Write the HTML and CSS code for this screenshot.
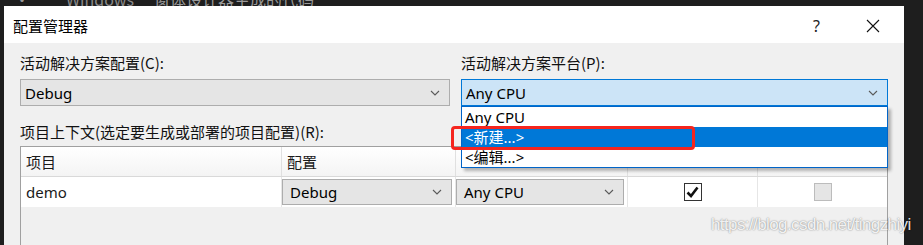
FILE: index.html
```html
<!DOCTYPE html>
<html lang="zh-CN">
<head>
<meta charset="utf-8">
<title>配置管理器</title>
<link rel="stylesheet" href="styles.css">
</head>
<body>
<div class="top-strip"><span class="code-word w1">·</span><span class="code-word w2">Windows</span><span class="code-word w3">窗体设计器生成的代码</span></div>
<div class="desk">
  <div class="gutter"></div>
  <div class="dialog">
    <div class="titlebar">
      <span class="title">配置管理器</span>
      <span class="help">?</span>
      <span class="close"><svg width="14" height="14" viewBox="0 0 14 14"><path d="M1 1L13 13M13 1L1 13" stroke="#111" stroke-width="1.1" fill="none"/></svg></span>
    </div>
    <div class="body">
      <div class="top-row">
        <div class="field field-left">
          <div class="label">活动解决方案配置(C):</div>
          <div class="combo"><span class="combo-text">Debug</span><svg class="chev" width="10" height="6" viewBox="0 0 10 6"><path d="M1 1L5 5L9 1" stroke="#5a5a5a" stroke-width="1.1" fill="none"/></svg></div>
        </div>
        <div class="field field-right">
          <div class="label">活动解决方案平台(P):</div>
          <div class="combo combo-open"><span class="combo-text">Any CPU</span><svg class="chev" width="10" height="6" viewBox="0 0 10 6"><path d="M1 1L5 5L9 1" stroke="#5a5a5a" stroke-width="1.1" fill="none"/></svg>
            <ul class="droplist">
              <li class="item">Any CPU</li>
              <li class="item item-selected">&lt;新建...&gt;</li>
              <li class="item">&lt;编辑...&gt;</li>
              <li class="mark"></li>
            </ul>
          </div>
        </div>
      </div>
      <div class="label ctx-label">项目上下文(选定要生成或部署的项目配置)(R):</div>
      <div class="grid">
        <div class="row head">
          <div class="cell c1">项目</div>
          <div class="cell c2">配置</div>
          <div class="cell c3"></div>
          <div class="cell c4"></div>
          <div class="cell c5"></div>
        </div>
        <div class="row data">
          <div class="cell c1">demo</div>
          <div class="cell c2"><div class="combo small"><span class="combo-text">Debug</span><svg class="chev" width="10" height="6" viewBox="0 0 10 6"><path d="M1 1L5 5L9 1" stroke="#5a5a5a" stroke-width="1.1" fill="none"/></svg></div></div>
          <div class="cell c3"><div class="combo small"><span class="combo-text">Any CPU</span><svg class="chev" width="10" height="6" viewBox="0 0 10 6"><path d="M1 1L5 5L9 1" stroke="#5a5a5a" stroke-width="1.1" fill="none"/></svg></div></div>
          <div class="cell c4 center"><span class="check"><svg width="13" height="12" viewBox="0 0 13 12"><path d="M1.5 6.5L5 10L11.5 1.5" stroke="#111" stroke-width="2.6" fill="none" stroke-linejoin="miter"/></svg></span></div>
          <div class="cell c5 center"><span class="check disabled"></span></div>
        </div>
        <div class="filler"></div>
      </div>
    </div>
  </div>
  <div class="right-dark"></div>
</div>
<div class="watermark">https://blog.csdn.net/tingzhiyi</div>
</body>
</html>
```

FILE: styles.css
```css
html, body {
  margin: 0;
  padding: 0;
}
body {
  width: 923px;
  height: 245px;
  overflow: hidden;
  background: #1e1e1e;
  font-family: "Segoe UI", "Noto Sans", "Noto Sans CJK SC", sans-serif;
  font-size: 15px;
  color: #1a1a1a;
  position: relative;
}
.top-strip {
  height: 6px;
  overflow: hidden;
  background: #1e1e1e;
  display: flex;
  align-items: flex-end;
}
.code-word {
  display: block;
  flex-shrink: 0;
  font-family: "Noto Sans CJK SC", sans-serif;
  font-size: 16px;
  line-height: 20px;
  height: 20px;
  margin-bottom: -3px;
  color: #9a9a9a;
  white-space: nowrap;
}
.w1 { margin-left: 14px; }
.w2 { margin-left: 36px; color: #8a8a8a; }
.w3 { margin-left: 20px; }
.desk {
  display: flex;
  height: 239px;
}
.gutter {
  width: 4px;
  flex-shrink: 0;
  background: #1e1e1e;
}
.right-dark {
  flex: 1;
  background: #1e1e1e;
}
.dialog {
  width: 900px;
  flex-shrink: 0;
  background: #f0f0f0;
  display: flex;
  flex-direction: column;
  overflow: hidden;
}
.titlebar {
  height: 37px;
  flex-shrink: 0;
  background: #fff;
  display: flex;
  align-items: center;
  padding-left: 9px;
}
.title {
  font-family: "Noto Sans CJK SC", sans-serif;
  font-size: 15px;
  color: #000;
  flex: 1;
  padding-top: 1px;
}
.help {
  font-size: 16px;
  color: #222;
  margin-right: 46px;
  padding-top: 2px;
}
.close {
  display: flex;
  margin-right: 24px;
  padding-top: 2px;
}
.body {
  padding: 10px 16px 0 16px;
  flex-shrink: 0;
}
.top-row {
  display: flex;
  gap: 11px;
}
.field-left {
  width: 430px;
}
.field-right {
  flex: 1;
}
.label {
  font-family: "Noto Sans CJK SC", sans-serif;
  font-size: 15px;
  line-height: 20px;
  height: 20px;
  color: #111;
  margin-bottom: 6px;
  white-space: nowrap;
}
.combo {
  height: 25px;
  border: 1px solid #adadad;
  background: #e5e5e5;
  display: flex;
  align-items: center;
  padding: 0 9px 0 4px;
  position: relative;
}
.combo-text {
  flex: 1;
  white-space: nowrap;
  color: #000;
}
.chev {
  display: block;
}
.combo-open {
  background: #cce4f7;
  border-color: #0078d7;
}
.droplist {
  list-style: none;
  margin: 0;
  padding: 0;
  position: absolute;
  left: -1px;
  right: -1px;
  top: 26px;
  background: #fff;
  border: 1px solid #0064c8;
  box-shadow: 3px 3px 3px rgba(0, 0, 0, 0.28);
  z-index: 5;
}
.item {
  height: 20px;
  line-height: 20px;
  padding-left: 3px;
  color: #000;
  white-space: nowrap;
}
.item-selected {
  background: #0078d7;
  color: #fff;
}
.mark {
  position: absolute;
  left: -11px;
  top: 19px;
  width: 238px;
  height: 18px;
  border: 3px solid #f5251e;
  border-radius: 4px;
}
.ctx-label {
  margin-top: 16px;
  margin-bottom: 4px;
}
.grid {
  border: 1px solid #a0a0a0;
  border-bottom: none;
  height: 120px;
  display: flex;
  flex-direction: column;
  background: #f0f0f0;
}
.row {
  display: flex;
  flex-shrink: 0;
}
.cell {
  border-right: 1px solid #e6e6e6;
  box-sizing: border-box;
  display: flex;
  align-items: center;
  white-space: nowrap;
}
.c1 { width: 261px; }
.c2 { width: 174px; }
.c3 { width: 172px; }
.c4 { width: 130px; }
.c5 { flex: 1; border-right: none; }
.head {
  height: 29px;
  background: linear-gradient(#ffffff, #f4f4f4);
  border-bottom: 1px solid #d9d9d9;
}
.head .cell {
  font-family: "Noto Sans CJK SC", sans-serif;
  padding-left: 5px;
  border-right-color: #e0e0e0;
}
.data {
  height: 30px;
  background: #fff;
}
.data .c1 {
  padding-left: 5px;
}
.data .c2, .data .c3 {
  padding: 0 3px 0 0;
}
.combo.small {
  flex: 1;
  height: 24px;
  padding-left: 7px;
}
.center {
  justify-content: center;
}
.check {
  width: 16px;
  height: 16px;
  border: 1px solid #333;
  background: #fff;
  display: flex;
  align-items: center;
  justify-content: center;
}
.check.disabled {
  background: #e5e5e5;
  border-color: #bcbcbc;
}
.filler {
  flex: 1;
}
.watermark {
  position: absolute;
  left: 711px;
  top: 215px;
  font-family: "Liberation Sans", sans-serif;
  font-size: 17px;
  letter-spacing: -0.6px;
  color: rgba(255, 255, 255, 0.9);
  text-shadow: 0 0 2px rgba(0, 0, 0, 0.35), 0 0 1px rgba(0, 0, 0, 0.25);
  white-space: nowrap;
}
```
